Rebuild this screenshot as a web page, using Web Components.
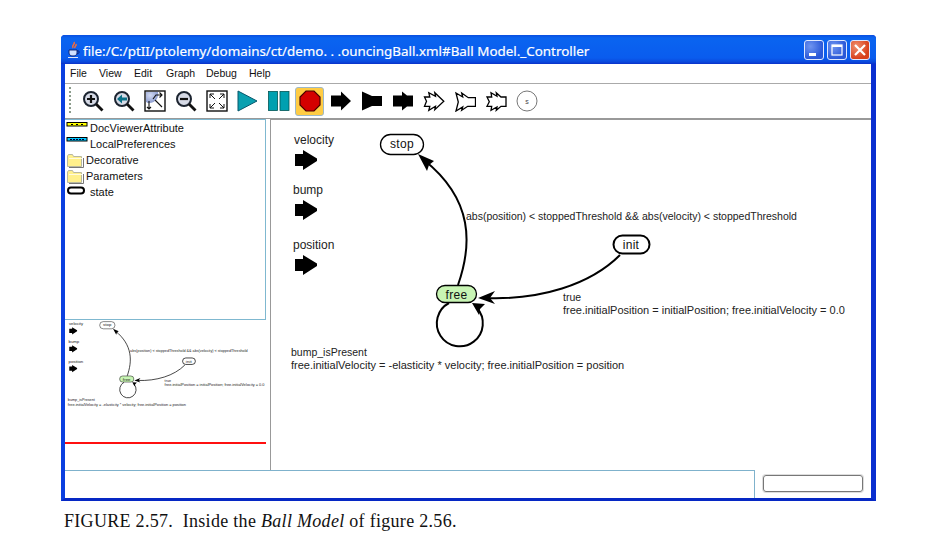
<!DOCTYPE html>
<html>
<head>
<meta charset="utf-8">
<title>Ball Model Controller</title>
<style>
html, body { margin: 0; background: #fff; }
body { width: 938px; height: 550px; overflow: hidden; font-family: "Liberation Sans", Arial, sans-serif; }
</style>
</head>
<body>
<doc-page>
  <app-window>
    <title-bar>file:/C:/ptII/ptolemy/domains/ct/demo. . .ouncingBall.xml#Ball Model._Controller</title-bar>
    <menu-bar></menu-bar>
    <tool-bar></tool-bar>
    <work-area>
      <side-panel slot="side">
        <tree-row kind="doc">DocViewerAttribute</tree-row>
        <tree-row kind="pref">LocalPreferences</tree-row>
        <tree-row kind="folder">Decorative</tree-row>
        <tree-row kind="folder">Parameters</tree-row>
        <tree-row kind="state">state</tree-row>
      </side-panel>
      <fsm-diagram slot="main" view="271 119 600 351" style="width:600px;height:351px"></fsm-diagram>
    </work-area>
    <status-bar></status-bar>
  </app-window>
  <figure-caption>FIGURE 2.57.&nbsp; Inside the <i>Ball Model</i> of figure 2.56.</figure-caption>
</doc-page>

<script>
class DocPage extends HTMLElement {
    constructor() {
        super();
        this.attachShadow({ mode: 'open' });
        this.shadowRoot.innerHTML = `
        <style>
            :host { display: block; padding: 35px 0 0 61px; }
        </style>
        <slot></slot>`;
    }
}

class AppWindow extends HTMLElement {
    constructor() {
        super();
        this.attachShadow({ mode: 'open' });
        this.shadowRoot.innerHTML = `
        <style>
            :host {
                display: flex;
                flex-direction: column;
                box-sizing: border-box;
                width: 815px;
                height: 466px;
                background: #0a3fe0;
                border-radius: 4px 4px 0 0;
                border-left: 4px solid #0a3fe0;
                border-right: 5px solid #0a2fd0;
                border-bottom: 3px solid #0628c4;
            }
        </style>
        <slot></slot>`;
    }
}

class TitleBar extends HTMLElement {
    constructor() {
        super();
        this.attachShadow({ mode: 'open' });
        this.shadowRoot.innerHTML = `
        <style>
            :host {
                display: flex;
                align-items: center;
                height: 29px;
                flex: none;
                margin: 0 -5px 0 -4px;
                padding: 0 6px 0 6px;
                border-radius: 4px 4px 0 0;
                background: linear-gradient(#0a4ee0 0, #0a64f0 3px, #0a5cee 23px, #0a48dc 27px, #0a30c8 29px);
                color: #fff;
                font: 13.4px "Noto Sans", "DejaVu Sans", sans-serif;
                -webkit-text-stroke: 0.2px #fff;
            }
            .java { width: 14px; height: 18px; margin-right: 2px; flex: none; }
            .text { flex: 1; white-space: nowrap; overflow: hidden; padding-top: 2px; }
            .btn {
                width: 20px; height: 20px; margin-left: 3px; box-sizing: border-box;
                border: 1px solid #dfe8ff; border-radius: 3px;
                background: radial-gradient(circle at 30% 30%, #6f94f0, #2a58d8 70%);
                display: flex; flex: none;
            }
            .btn.close { background: radial-gradient(circle at 30% 30%, #f09070, #d8401c 70%); }
            .btn svg { width: 18px; height: 18px; }
        </style>
        <svg class="java" viewBox="0 0 14 18">
            <path d="M7 1c2 2-3 3-1 6M9 3c1 2-2 2-1 4" fill="none" stroke="#f06a3c" stroke-width="1.6"/>
            <path d="M2 9h8v3c0 2-2 3-4 3s-4-1-4-3z" fill="#cfe0ff" stroke="#0a1f70" stroke-width=".9"/>
            <path d="M10 10c3-.5 3 2 0 3" fill="none" stroke="#0a1f70" stroke-width="1"/>
            <path d="M1 16.500h10" fill="none" stroke="#dfe6f8" stroke-width="1"/>
        </svg>
        <span class="text"><slot></slot></span>
        <span class="btn"><svg viewBox="0 0 18 18"><rect x="4" y="12" width="7" height="3" fill="#fff"/></svg></span>
        <span class="btn"><svg viewBox="0 0 18 18"><rect x="4" y="4" width="10" height="10" fill="none" stroke="#fff" stroke-width="1.2"/><rect x="4" y="4" width="10" height="2" fill="#fff"/></svg></span>
        <span class="btn close"><svg viewBox="0 0 18 18"><path d="M4 4l10 10M14 4L4 14" stroke="#fff" stroke-width="2.2"/></svg></span>`;
    }
}

class MenuBar extends HTMLElement {
    constructor() {
        super();
        this.attachShadow({ mode: 'open' });
        const items = [['File', 29], ['View', 35], ['Edit', 32], ['Graph', 40], ['Debug', 43], ['Help', 30]];
        this.shadowRoot.innerHTML = `
        <style>
            :host {
                display: flex;
                align-items: center;
                flex: none;
                box-sizing: border-box;
                height: 20px;
                padding: 0 0 2px 5px;
                background: #fff;
                border-bottom: 1px solid #aaa;
                font: 10.5px "Liberation Sans", Arial, sans-serif;
                color: #111;
            }
        </style>
        ${items.map(([t, w]) => `<span style="width:${w}px">${t}</span>`).join('')}`;
    }
}

const LENS = `<circle cx="9" cy="9" r="7" fill="#d6dae6" stroke="#1c2430" stroke-width="2"/><path d="M14 14l6.500 6.500" stroke="#111" stroke-width="2.800"/>`;
const ICONS = {
    zoomin: `${LENS}<path d="M5 9h8M9 5v8" stroke="#111" stroke-width="2.200"/>`,
    zoomback: `${LENS}<path d="M4 9l5-4.500v3h5v3H9v3z" fill="#0a7088"/>`,
    fit: `<defs><radialGradient id="g" cx=".35" cy=".3" r=".7"><stop offset="0" stop-color="#d4dcf4"/><stop offset="1" stop-color="#8a9ace"/></radialGradient></defs><rect x="1" y="1" width="20" height="20" fill="#fff" stroke="#111" stroke-width="1.400"/><path d="M2 2h12c1 5-2 11-9 11-1.500 0-2-.5-3-1z" fill="url(#g)"/><path d="M9 9l3-4h6M15.500 2.500L18 5l-2.500 2.500M11 10l7 7M5 11v8M3 17l2 2 2-2" fill="none" stroke="#111" stroke-width="1.100"/>`,
    zoomout: `${LENS}<path d="M5 9h8" stroke="#111" stroke-width="2.200"/>`,
    full: `<rect x="1" y="1" width="20" height="20" fill="#fff" stroke="#111" stroke-width="1.400"/><path d="M4 4l5 5M4 4h4M4 4v4M18 4l-5 5M18 4h-4M18 4v4M4 18l5-5M4 18h4M4 18v-4M18 18l-5-5M18 18h-4M18 18v-4" fill="none" stroke="#111" stroke-width="1"/>`,
    play: `<path d="M1 1l19 10L1 21z" fill="#0aa0b0" stroke="#06566a" stroke-width="1"/>`,
    pause: `<rect x="0.500" y="1.500" width="9" height="19" fill="#00a0b0" stroke="#055" stroke-width=".8"/><rect x="12" y="1.500" width="9" height="19" fill="#00a0b0" stroke="#055" stroke-width=".8"/>`,
    stop: `<path d="M7 1h8l6 6v8l-6 6H7l-6-6V7z" fill="#d40000" stroke="#400" stroke-width="1.200"/>`,
    a1: `<path d="M1 5.500h10V1.500L21 11 11 20.500v-4H1z" fill="#000"/>`,
    a2: `<path d="M1 1.500l10 4.500h10v10H11l-10 4.500z" fill="#000"/>`,
    a3: `<path d="M1 5.500h9V1.500l5 4h6v11h-6l-5 4v-4H1z" fill="#000"/>`,
    o1: `<path d="M1.500 7H6.800L5.800 2.700 12.500 6.300 11.800 2.700 20.800 11.300 11.800 19.700 12.500 16.300 5.800 20.300 6.800 16.300H1.500L3.500 11.300z" fill="#fff" stroke="#000" stroke-width="1.300"/>`,
    o2: `<path d="M2 3L8.700 7 7.700 3 14.300 7.700H21.500V16.300H13.700L7.700 20.300 8.700 17 2 21 4.300 12z" fill="#fff" stroke="#000" stroke-width="1.300"/>`,
    o3: `<path d="M2 7H6.700L6 2.700 12 6.300 11.300 2.700 16 7H21V16.300H16L11.300 20.300 12 17 6 20.300 6.700 16.300H2L4.300 11.700z" fill="#fff" stroke="#000" stroke-width="1.300"/>`,
    s: `<circle cx="11" cy="11" r="10" fill="#fff" stroke="#777" stroke-width="1"/><text x="11" y="13.500" font-size="7" text-anchor="middle" font-family="Liberation Sans" fill="#444">s</text>`
};

class ToolIcon extends HTMLElement {
    constructor() {
        super();
        this.attachShadow({ mode: 'open' });
    }

    connectedCallback() {
        const on = this.hasAttribute('active');
        this.shadowRoot.innerHTML = `
        <style>
            :host {
                display: flex;
                align-items: center;
                justify-content: center;
                box-sizing: border-box;
                flex: none;
                width: 31px;
                height: 30px;
            }
            .box {
                display: flex; align-items: center; justify-content: center;
                width: 29px; height: 29px; box-sizing: border-box;
                ${on ? 'background:#ffcc44; border:1px solid #9db8c8; border-radius:3px;' : ''}
            }
            svg { width: 22px; height: 22px; display: block; }
        </style>
        <span class="box"><svg viewBox="0 0 22 22">${ICONS[this.getAttribute('name')]}</svg></span>`;
    }
}

class ToolBar extends HTMLElement {
    constructor() {
        super();
        this.attachShadow({ mode: 'open' });
        const names = ['zoomin', 'zoomback', 'fit', 'zoomout', 'full', 'play', 'pause', 'stop', 'a1', 'a2', 'a3', 'o1', 'o2', 'o3', 's'];
        this.shadowRoot.innerHTML = `
        <style>
            :host {
                display: flex;
                align-items: center;
                flex: none;
                box-sizing: border-box;
                height: 35px;
                padding-left: 4px;
                background: #fff;
                border-bottom: 1px solid #999;
            }
            .grip { width: 2px; height: 28px; margin-right: 6px; background: repeating-linear-gradient(#8c9c8c 0 2px, transparent 2px 4px); }
        </style>
        <span class="grip"></span>
        ${names.map(n => `<tool-icon name="${n}"${n === 'stop' ? ' active' : ''}></tool-icon>`).join('')}`;
    }
}

class WorkArea extends HTMLElement {
    constructor() {
        super();
        this.attachShadow({ mode: 'open' });
        this.shadowRoot.innerHTML = `
        <style>
            :host { display: flex; flex: none; height: 351px; background: #fff; }
            .side { width: 201px; flex: none; }
            .split { flex: none; border-right: 1px solid #999; width: 4px; }
            .main { flex: 1; box-shadow: inset 0 1px 0 #999; }
        </style>
        <div class="side"><slot name="side"></slot></div>
        <div class="split"></div>
        <div class="main"><slot name="main"></slot></div>`;
    }
}

class SidePanel extends HTMLElement {
    constructor() {
        super();
        this.attachShadow({ mode: 'open' });
        this.shadowRoot.innerHTML = `
        <style>
            :host { display: flex; flex-direction: column; height: 351px; }
            .tree {
                box-sizing: border-box;
                flex: none;
                height: 201px;
                padding: 0 0 0 1px;
                border: 1px solid #7fb8d0;
                border-left: none;
            }
            .pan { flex: none; height: 122px; overflow: hidden; }
            .rule { flex: none; height: 2px; background: #ff1010; }
        </style>
        <div class="tree"><slot></slot></div>
        <div class="pan"><fsm-diagram view="283 130 565 339" style="width:201px;height:122px"></fsm-diagram></div>
        <div class="rule"></div>`;
    }
}

const TREE_ICONS = {
    doc: ['<rect x="1" y="2.500" width="20" height="3.500" fill="#ffff00" stroke="#000"/><path d="M5 4.500h2M10 4.500h2M15 4.500h2" stroke="#000"/>', 24],
    pref: ['<rect x="1" y="1.500" width="20" height="3.500" fill="#00c8ff" stroke="#000"/><path d="M4 3.500h14" stroke="#003" stroke-dasharray="2 1"/>', 24],
    folder: ['<path d="M1.500 14.500V4l1-1.500h4l1 2h8v10z" fill="#fff08c" stroke="#b8b8a0"/><path d="M3 6.500h13" stroke="#fffbe0"/><path d="M17.500 6v9.500H3" fill="none" stroke="#777"/>', 20],
    state: ['<rect x="2" y="3.500" width="16" height="6" rx="3" ry="3" fill="#fff" stroke="#000" stroke-width="2"/>', 24]
};

class TreeRow extends HTMLElement {
    constructor() {
        super();
        this.attachShadow({ mode: 'open' });
    }

    connectedCallback() {
        const [icon, w] = TREE_ICONS[this.getAttribute('kind')];
        this.shadowRoot.innerHTML = `
        <style>
            :host {
                display: flex;
                height: 16px;
                font: 11px/16px "Liberation Sans", Arial, sans-serif;
                color: #111;
                white-space: nowrap;
            }
            svg { width: ${w}px; height: 16px; flex: none; }
        </style>
        <svg viewBox="0 0 ${w} 16">${icon}</svg><span><slot></slot></span>`;
    }
}

class FsmDiagram extends HTMLElement {
    constructor() {
        super();
        this.attachShadow({ mode: 'open' });
    }

    connectedCallback() {
        // state ports: chunky arrow with a blunt tip
        const port = (x, y) => `<path transform="translate(${x} ${y})" d="M0 4h8V0l14 8.500v2.500L8 20v-4H0z" fill="#000"/>`;
        this.shadowRoot.innerHTML = `
        <style>
            :host { display: block; }
            svg { display: block; width: 100%; height: 100%; }
            text { font: 11px "Liberation Sans", Arial, sans-serif; fill: #222; }
            .port { font-size: 12px; }
            .st { font-size: 12px; fill: #111; letter-spacing: .3px; }
            .edge { fill: none; stroke: #000; stroke-width: 2; }
        </style>
        <svg viewBox="${this.getAttribute('view')}" preserveAspectRatio="none">
            <text class="port" x="294" y="144">velocity</text>
            ${port(295, 150)}
            <text class="port" x="293" y="194">bump</text>
            ${port(295, 200)}
            <text class="port" x="293" y="249">position</text>
            ${port(295, 255)}

            <path class="edge" d="M458 285C472 245 474 200 424 160"/>
            <path d="M418 154l16 7-5 4-2 6z"/>
            <path class="edge" d="M620 255C590 285 540 300 486 298"/>
            <path d="M478 298l17-7-5 7 5 6z"/>
            <path class="edge" d="M449 303A23 23 0 1 0 477 308"/>
            <path d="M472 303l13 1-5 5-1 6z"/>

            <rect x="380.500" y="134.500" width="43" height="20" rx="10" fill="#fff" stroke="#000" stroke-width="1.300"/>
            <text class="st" x="402" y="148" text-anchor="middle">stop</text>
            <rect x="613.500" y="235.500" width="36" height="18" rx="9" fill="#fff" stroke="#000" stroke-width="2"/>
            <text class="st" x="631" y="249" text-anchor="middle">init</text>
            <rect x="436.500" y="285.500" width="40" height="17" rx="8.500" fill="#c8f5b4" stroke="#000" stroke-width="1.300"/>
            <text class="st" x="456.500" y="298.500" text-anchor="middle">free</text>

            <text x="466" y="220" style="font-size:10.500px">abs(position) &lt; stoppedThreshold &amp;&amp; abs(velocity) &lt; stoppedThreshold</text>
            <text x="563" y="301" style="font-size:10.500px">true</text>
            <text x="563" y="314">free.initialPosition = initialPosition; free.initialVelocity = 0.0</text>
            <text x="291" y="356" style="font-size:10.500px">bump_isPresent</text>
            <text x="291" y="369">free.initialVelocity = -elasticity * velocity; free.initialPosition = position</text>
        </svg>`;
    }
}

class StatusBar extends HTMLElement {
    constructor() {
        super();
        this.attachShadow({ mode: 'open' });
        this.shadowRoot.innerHTML = `
        <style>
            :host { display: flex; flex: none; height: 28px; background: #fff; }
            .msg { width: 690px; flex: none; box-sizing: border-box; border-top: 1px solid #7fb2cc; border-right: 1px solid #7fb2cc; }
            .prog { width: 100px; height: 17px; box-sizing: border-box; margin: 5px 0 0 8px; border: 1px solid #777; border-radius: 3px; box-shadow: 0 0 0 1px #ddd; }
        </style>
        <div class="msg"></div>
        <div class="prog"></div>`;
    }
}

class FigureCaption extends HTMLElement {
    constructor() {
        super();
        this.attachShadow({ mode: 'open' });
        this.shadowRoot.innerHTML = `
        <style>
            :host {
                display: block;
                margin: 10px 0 0 3px;
                font: 18px/20px "Liberation Serif", "Times New Roman", serif;
                letter-spacing: .3px;
                color: #111;
                white-space: nowrap;
            }
        </style>
        <slot></slot>`;
    }
}

customElements.define('doc-page', DocPage);
customElements.define('app-window', AppWindow);
customElements.define('title-bar', TitleBar);
customElements.define('menu-bar', MenuBar);
customElements.define('tool-icon', ToolIcon);
customElements.define('tool-bar', ToolBar);
customElements.define('work-area', WorkArea);
customElements.define('side-panel', SidePanel);
customElements.define('tree-row', TreeRow);
customElements.define('fsm-diagram', FsmDiagram);
customElements.define('status-bar', StatusBar);
customElements.define('figure-caption', FigureCaption);
</script>
</body>
</html>
